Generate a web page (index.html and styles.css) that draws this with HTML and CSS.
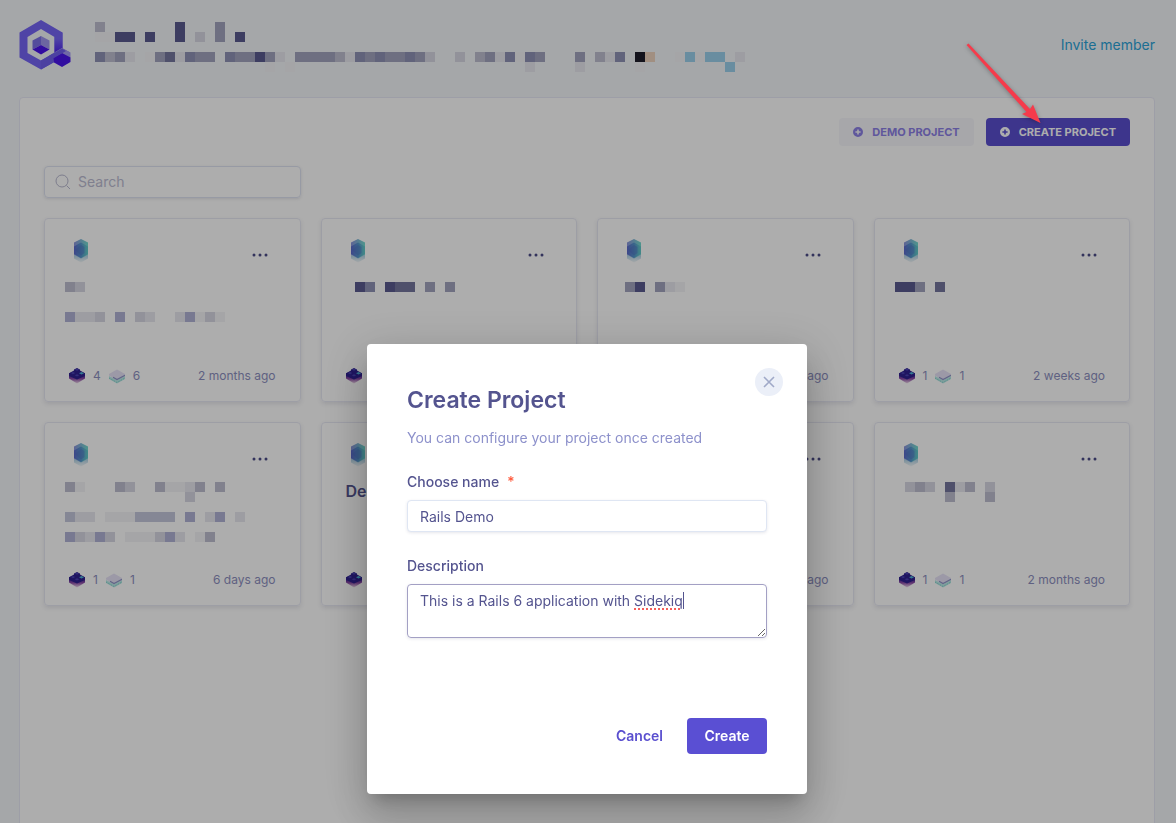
FILE: index.html
```html
<!DOCTYPE html>
<html lang="en">
<head>
<meta charset="utf-8">
<meta name="viewport" content="width=device-width, initial-scale=1">
<title>Create Project</title>
<link rel="stylesheet" href="styles.css">
</head>
<body>
<svg class="defs" width="0" height="0" aria-hidden="true">
  <defs>
    <linearGradient id="hexOuter" x1="0" y1="0" x2="1" y2="0"><stop offset="0" stop-color="#8b93dc"/><stop offset="1" stop-color="#72dccf"/></linearGradient>
    <linearGradient id="hexInner" x1="0" y1="0" x2="1" y2="0"><stop offset="0" stop-color="#5c68cc"/><stop offset="0.5" stop-color="#5596cc"/><stop offset="1" stop-color="#62ccc8"/></linearGradient>
    <linearGradient id="hexShade" x1="0" y1="0" x2="0" y2="1"><stop offset="0.6" stop-color="#b4d4e6"/><stop offset="1" stop-color="#f4f8fa"/></linearGradient>
    <linearGradient id="blockSide" x1="0" y1="0" x2="0" y2="1"><stop offset="0.3" stop-color="#3a1f94"/><stop offset="0.65" stop-color="#8b4aa6"/><stop offset="1" stop-color="#f0dcec"/></linearGradient>
    <linearGradient id="ring" x1="0" y1="0" x2="0" y2="1"><stop offset="0.3" stop-color="#7565f5"/><stop offset="1" stop-color="#4a1bec"/></linearGradient>
    <symbol id="hex" viewBox="0 0 24 24">
      <path fill="url(#hexShade)" d="M5 7h14v12.500l-7 4-7-4z"/>
      <path fill="url(#hexOuter)" d="M12 0l7 3.500v12L12 19.500l-7-4v-12z"/>
      <path fill="url(#hexInner)" d="M12 3.500l7 4V15l-7 4-7-4V7.500z"/>
      <path fill="#4f6fc4" opacity=".45" d="M12 6l3.500 2v6L12 16.500 6 11z"/>
    </symbol>
    <symbol id="blocks" viewBox="0 0 16 16">
      <path fill="url(#blockSide)" d="M0 5.500L8 2l8 3.500v5L8 15.500l-8-5z"/>
      <path fill="#2f2090" d="M8 0l3 1.500v1l5 2.700V8L8 11.500 0 8V5.200l5-2.700v-1z"/>
      <path fill="#4a42b4" d="M8 .5l2.200 1L8 2.700l-2.200-1.200zM4 4l2.200 1.100L4 6.200 1.800 5.100zM8 6.200l2.200 1.100L8 8.400 5.800 7.300z"/>
      <path fill="#4fb5d8" d="M12.500 4l2.500 1.200-2.500 1.300L10 5.200z"/>
    </symbol>
    <symbol id="layer" viewBox="0 0 16 16">
      <path fill="#a5e3df" opacity=".75" d="M0 8l8 4 8-4v3L8 15.500 0 11z"/>
      <path fill="#e6e2f6" d="M8 1.500l8 4.500v1.500L8 12 0 7.500V6z"/>
      <path fill="none" stroke="#8f94c8" stroke-width="1.200" d="M4 9.200l4 2.300 8-4.300"/>
      <path fill="none" stroke="#75cdc8" stroke-width="1" stroke-dasharray="1 1" d="M0 10l8 4.500 8-4.500"/>
    </symbol>
    <symbol id="dots" viewBox="0 0 16 4">
      <circle cx="2" cy="2" r="1.500"/><circle cx="8" cy="2" r="1.500"/><circle cx="14" cy="2" r="1.500"/>
    </symbol>
    <symbol id="plus" viewBox="0 0 10 10">
      <path fill-rule="evenodd" d="M5 0a5 5 0 100 10A5 5 0 005 0zM4.200 2.400h1.600v1.800h1.800v1.600H5.800v1.800H4.200V5.800H2.400V4.200h1.800z"/>
    </symbol>
  </defs>
</svg>

<div class="page">
  <header class="header">
    <svg class="logo" viewBox="0 0 52 50" role="img" aria-label="Logo">
      <path fill="#7565f5" fill-rule="evenodd" d="M22 0l21.500 12.500v25L22 49.500.5 37.500v-25zM22 9L8.500 17v16L22 40.500 35.500 33V17z"/>
      <path fill="url(#ring)" d="M35.500 17l8-4.500V29l-8 5z"/>
      <path fill="#7060ee" d="M22 49.500V40.500L43 28l8 4.500L30 45z"/>
      <path fill="#a79df5" d="M43 28l8.500 4.500v5L43 42.500 34.500 38v-5z"/>
      <path fill="#4a16ec" d="M34.500 37.500L43 33l8.500 4.500v4.500L43 47l-8-4.500z"/>
      <path fill="#7060ee" d="M30 36l13-7.500 4 2.500-12 7z"/>
      <path fill="#7c70e6" d="M22 16l-8.500 4.500v9L22 25z"/>
      <path fill="#a095ee" d="M22 16l8.500 4.500v9L22 25z"/>
      <path fill="#4a12ec" d="M22 25l8.500 4.500L22 34.500l-8.500-5z"/>
    </svg>
    <svg class="redacted redacted-head" viewBox="0 -2 650 50" aria-hidden="true">
      <path class="k1" d="M20 10h20v10H20zM50 10h10v10H50zM80 0h10v20H80zM140 10h10v10h-10zM160 30h10v10h-10z"/>
      <path class="k2" d="M70 30h10v10H70z"/>
      <path class="k3" d="M0 30h10v10H0zM90 30h10v10H90zM130 30h10v10h-10zM260 30h10v10h-10zM280 30h10v10h-10zM310 30h10v10h-10zM410 30h10v10h-10zM430 30h10v10h-10zM520 30h10v10h-10z"/>
      <path class="k4" d="M120 0h10v20h-10zM20 30h10v10H20zM60 30h10v10H60zM100 30h20v10h-20zM140 30h20v10h-20zM170 30h10v10h-10zM200 30h40v10h-40zM270 30h10v10h-10zM290 30h20v10h-20zM320 30h10v10h-10zM390 30h10v10h-10zM440 30h10v10h-10zM480 30h10v10h-10z"/>
      <path class="k5" d="M0 0h10v10H0zM10 30h10v10H10zM240 30h10v10h-10zM380 30h10v10h-10zM500 30h10v10h-10z"/>
      <path class="k6" d="M100 10h10v10h-10zM330 30h10v10h-10zM360 30h10v10h-10z"/>
      <path class="k7" d="M30 30h10v10H30zM80 30h10v10H80zM180 30h10v10h-10zM250 30h10v10h-10zM400 30h10v10h-10zM430 40h10v10h-10zM480 40h10v10h-10zM510 30h10v10h-10zM640 30h10v10h-10z"/>
      <path class="k8" d="M0 10h20v10H0zM50 30h10v10H50zM170 40h10v10h-10zM190 40h10v10h-10zM420 30h10v10h-10zM580 30h10v10h-10zM600 30h10v10h-10zM540 40h10v10h-10z"/>
      <path fill="#1e1d2a" d="M540 30h10v10h-10z"/>
      <path fill="#eed3be" d="M550 30h10v10h-10z"/>
      <path fill="#9bd0ec" d="M590 30h10v10h-10zM610 30h20v10h-20zM630 40h10v10h-10z"/>
    </svg>
    <a class="invite" href="#">Invite member</a>
  </header>

  <main class="panel">
    <div class="actions">
      <button class="btn btn-soft" type="button"><svg class="plus" aria-hidden="true"><use href="#plus"/></svg>DEMO PROJECT</button>
      <button class="btn btn-solid" type="button"><svg class="plus" aria-hidden="true"><use href="#plus"/></svg>CREATE PROJECT</button>
    </div>
    <div class="grid">
      <label class="search">
        <svg class="search-icon" viewBox="0 0 16 16" aria-hidden="true"><circle cx="7" cy="7" r="6"/><path d="M11.500 11.500L15 15"/></svg>
        <input type="search" placeholder="Search" aria-label="Search">
      </label>
    </div>
    <div class="grid">
      <article class="card">
        <div class="card-top"><svg class="hex" aria-hidden="true"><use href="#hex"/></svg><button class="more" type="button" aria-label="More"><svg class="dots"><use href="#dots"/></svg></button></div>
        <svg class="redacted" viewBox="0 0 200 60" aria-hidden="true">
          <path class="k5" d="M-4 4h10v10H-4z"/><path class="k6" d="M6 4h10v10H6z"/>
          <path class="b1" d="M-4 34h10v10H-4zM46 34h10v10H46zM116 34h10v10h-10z"/>
          <path class="k6" d="M26 34h10v10H26zM66 34h10v10H66zM136 34h10v10h-10z"/>
          <path class="k7" d="M6 34h20v10H6zM76 34h10v10H76zM106 34h10v10h-10z"/><path class="k8" d="M126 34h10v10h-10zM146 34h10v10h-10z"/>
        </svg>
        <div class="card-foot"><span class="stat"><svg class="mini"><use href="#blocks"/></svg>4</span><span class="stat"><svg class="mini"><use href="#layer"/></svg>6</span><time>2 months ago</time></div>
      </article>
      <article class="card">
        <div class="card-top"><svg class="hex" aria-hidden="true"><use href="#hex"/></svg><button class="more" type="button" aria-label="More"><svg class="dots"><use href="#dots"/></svg></button></div>
        <svg class="redacted" viewBox="0 0 200 60" aria-hidden="true">
          <path class="k1" d="M9 4h10v10H9zM39 4h10v10H39z"/><path class="k2" d="M49 4h20v10H49z"/><path class="k3" d="M19 4h10v10H19z"/><path class="k4" d="M79 4h10v10H79zM99 4h10v10H99z"/>
        </svg>
        <div class="card-foot"><span class="stat"><svg class="mini"><use href="#blocks"/></svg>1</span></div>
      </article>
      <article class="card">
        <div class="card-top"><svg class="hex" aria-hidden="true"><use href="#hex"/></svg><button class="more" type="button" aria-label="More"><svg class="dots"><use href="#dots"/></svg></button></div>
        <svg class="redacted" viewBox="0 0 200 60" aria-hidden="true">
          <path class="k1" d="M13 4h10v10H13z"/><path class="k4" d="M3 4h10v10H3zM33 4h10v10H33z"/><path class="k7" d="M43 4h10v10H43z"/><path class="k8" d="M53 4h10v10H53z"/>
        </svg>
        <div class="card-foot"><time>ago</time></div>
      </article>
      <article class="card">
        <div class="card-top"><svg class="hex" aria-hidden="true"><use href="#hex"/></svg><button class="more" type="button" aria-label="More"><svg class="dots"><use href="#dots"/></svg></button></div>
        <svg class="redacted" viewBox="0 0 200 60" aria-hidden="true">
          <path class="k1" d="M-4 4h20v10H-4z"/><path class="k4" d="M16 4h10v10H16z"/><path class="k2" d="M36 4h10v10H36z"/>
        </svg>
        <div class="card-foot"><span class="stat"><svg class="mini"><use href="#blocks"/></svg>1</span><span class="stat"><svg class="mini"><use href="#layer"/></svg>1</span><time>2 weeks ago</time></div>
      </article>
      <article class="card">
        <div class="card-top"><svg class="hex" aria-hidden="true"><use href="#hex"/></svg><button class="more" type="button" aria-label="More"><svg class="dots"><use href="#dots"/></svg></button></div>
        <svg class="redacted" viewBox="0 0 200 60" aria-hidden="true">
          <path class="k5" d="M-4 0h10v10H-4zM46 0h10v10H46zM86 0h10v10H86zM126 0h10v10h-10zM146 0h10v10h-10zM136 50h10v10h-10z"/>
          <path class="k6" d="M56 0h10v10H56zM116 10h10v10h-10zM6 50h10v10H6zM36 50h10v10H36zM86 50h10v10H86z"/>
          <path class="k7" d="M116 0h10v10h-10zM6 30h20v10H6zM136 30h10v10h-10zM166 30h10v10h-10zM16 50h10v10H16zM106 50h10v10h-10z"/>
          <path class="k8" d="M6 0h10v10H6zM96 0h20v10H96zM36 30h30v10H36zM56 50h30v10H56zM126 50h10v10h-10z"/>
          <path class="b2" d="M-4 30h10v10H-4zM66 30h40v10H66z"/>
          <path class="b1" d="M116 30h10v10h-10zM146 30h10v10h-10zM-4 50h10v10H-4zM26 50h10v10H26zM96 50h10v10H96z"/>
        </svg>
        <div class="card-foot"><span class="stat"><svg class="mini"><use href="#blocks"/></svg>1</span><span class="stat"><svg class="mini"><use href="#layer"/></svg>1</span><time>6 days ago</time></div>
      </article>
      <article class="card">
        <div class="card-top"><svg class="hex" aria-hidden="true"><use href="#hex"/></svg><button class="more" type="button" aria-label="More"><svg class="dots"><use href="#dots"/></svg></button></div>
        <h2 class="card-title">De</h2>
        <div class="card-foot"><span class="stat"><svg class="mini"><use href="#blocks"/></svg>1</span></div>
      </article>
      <article class="card">
        <div class="card-top"><svg class="hex" aria-hidden="true"><use href="#hex"/></svg><button class="more" type="button" aria-label="More"><svg class="dots"><use href="#dots"/></svg></button></div>
        <div class="card-foot"><time>ago</time></div>
      </article>
      <article class="card">
        <div class="card-top"><svg class="hex" aria-hidden="true"><use href="#hex"/></svg><button class="more" type="button" aria-label="More"><svg class="dots"><use href="#dots"/></svg></button></div>
        <svg class="redacted" viewBox="0 0 200 60" aria-hidden="true">
          <path class="k2" d="M46 0h10v10H46z"/><path class="k5" d="M16 0h10v10H16zM66 0h10v10H66zM46 10h10v10H46zM86 10h10v10H86z"/><path class="k6" d="M6 0h10v10H6zM26 0h10v10H26zM86 0h10v10H86z"/><path class="k7" d="M56 0h10v10H56z"/>
        </svg>
        <div class="card-foot"><span class="stat"><svg class="mini"><use href="#blocks"/></svg>1</span><span class="stat"><svg class="mini"><use href="#layer"/></svg>1</span><time>2 months ago</time></div>
      </article>
    </div>
  </main>
</div>

<div class="overlay">
  <form class="modal" role="dialog" aria-modal="true" aria-labelledby="modal-title">
    <button class="close" type="button" aria-label="Close"><svg viewBox="0 0 12 12"><path d="M1 1l10 10M11 1L1 11"/></svg></button>
    <h1 class="modal-title" id="modal-title">Create Project</h1>
    <p class="modal-sub">You can configure your project once created</p>
    <label class="label" for="name">Choose name<span class="required">*</span></label>
    <input class="field" id="name" type="text" value="Rails Demo">
    <label class="label" for="description">Description</label>
    <div class="area">
      <div class="area-marks" aria-hidden="true">This is a Rails 6 application with <span class="misspelt">Sidekiq</span></div>
      <textarea class="area-input" id="description" spellcheck="false">This is a Rails 6 application with Sidekiq</textarea>
    </div>
    <div class="modal-actions">
      <button class="link-btn" type="button">Cancel</button>
      <button class="primary-btn" type="submit">Create</button>
    </div>
  </form>
</div>

<svg class="arrow" viewBox="0 0 90 92" aria-hidden="true">
  <path d="M6.500 7L8.500 5.500 70 71l3-4.500L80.500 85 62 76l4.500-2z"/>
</svg>
</body>
</html>
```
FILE: styles.css
```css
* {
  box-sizing: border-box;
}

body {
  margin: 0;
  background: #f4f6fa;
  color: #54548f;
  font-family: Inter, "Liberation Sans", sans-serif;
  font-size: 14px;
  line-height: 20px;
}

button,
input,
textarea {
  font: inherit;
  color: inherit;
}

button {
  border: 0;
  padding: 0;
  background: none;
  cursor: pointer;
}

.defs {
  position: absolute;
}

.page {
  display: flex;
  flex-direction: column;
  height: 100vh;
  overflow: hidden;
  padding: 0 21px 0 19px;
}

.header {
  display: flex;
  align-items: center;
  gap: 24px;
  padding: 20px 0 27px;
}

.logo {
  flex: none;
  width: 52px;
  height: 50px;
}

.redacted {
  display: block;
  flex: none;
  width: 200px;
  height: 60px;
  margin-top: 7px;
  overflow: visible;
  shape-rendering: crispEdges;
}

.redacted-head {
  width: 650px;
  height: 50px;
  margin-top: 0;
}

.k1 { fill: #5a5a90; }
.k2 { fill: #75769e; }
.k3 { fill: #8f92b5; }
.k4 { fill: #a2a4be; }
.k5 { fill: #bfbfd0; }
.k6 { fill: #d7d7e3; }
.k7 { fill: #e7e7ef; }
.k8 { fill: #f4f4f6; }
.b1 { fill: #b2b3d6; }
.b2 { fill: #c5c7dc; }

.invite {
  margin-left: auto;
  color: #2ba3d8;
  text-decoration: none;
}

.panel {
  display: flex;
  flex: none;
  flex-direction: column;
  gap: 20px;
  min-height: 100vh;
  padding: 20px 24px;
  border: 1px solid #e8e9f6;
  border-radius: 4px;
  background: #fff;
}

.actions {
  display: flex;
  justify-content: flex-end;
  gap: 12px;
}

.btn {
  display: flex;
  align-items: center;
  gap: 9px;
  height: 28px;
  padding: 0 14px;
  border-radius: 4px;
  font-size: 11px;
  font-weight: 700;
}

.btn-soft {
  background: #f6f7fb;
  color: #8d80e6;
}

.btn-solid {
  background: #5a4fcf;
  color: #fff;
}

.plus {
  width: 10px;
  height: 10px;
  fill: currentColor;
}

.grid {
  display: grid;
  grid-template-columns: repeat(4, minmax(0, 1fr));
  gap: 20px;
}

.search {
  display: flex;
  align-items: center;
  gap: 7px;
  height: 32px;
  padding: 0 10px;
  border: 1px solid #dfe4f2;
  border-radius: 4px;
  box-shadow: 0 1px 3px rgba(60, 60, 100, 0.14);
}

.search-icon {
  flex: none;
  width: 16px;
  height: 16px;
  fill: none;
  stroke: #b9b9d0;
}

.search input {
  flex: 1;
  min-width: 0;
  padding: 0;
  border: 0;
  outline: 0;
  background: none;
}

.search input::placeholder {
  color: #bcbcd2;
  opacity: 1;
}

.card {
  display: flex;
  flex-direction: column;
  height: 184px;
  padding: 20px 24px 15px;
  border: 1px solid #e8e9f4;
  border-radius: 4px;
  box-shadow: 0 2px 4px rgba(60, 60, 100, 0.12);
}

.card-top {
  display: flex;
  align-items: flex-start;
  justify-content: space-between;
}

.hex {
  width: 24px;
  height: 24px;
}

.more {
  display: grid;
  place-items: center;
  width: 32px;
  height: 32px;
}

.dots {
  width: 16px;
  height: 4px;
  fill: #4c4c88;
}

.card-title {
  margin: 4px 0 0;
  font-size: 16px;
  font-weight: 600;
  line-height: 24px;
}

.card-foot {
  display: flex;
  align-items: center;
  gap: 8px;
  height: 20px;
  margin-top: auto;
  color: #8d8fc0;
  font-size: 12px;
}

.card-foot time {
  margin-left: auto;
}

.stat {
  display: flex;
  align-items: center;
  gap: 8px;
}

.mini {
  width: 16px;
  height: 16px;
}

.overlay {
  position: fixed;
  inset: 0;
  display: flex;
  align-items: flex-end;
  justify-content: center;
  padding: 0 21px 29px 19px;
  background: rgba(0, 0, 0, 0.32);
}

.modal {
  position: relative;
  display: flex;
  flex-direction: column;
  width: 100%;
  max-width: 440px;
  padding: 40px;
  border-radius: 4px;
  background: #fff;
  box-shadow: 0 11px 15px -7px rgba(0, 0, 0, 0.2), 0 24px 38px 3px rgba(0, 0, 0, 0.14), 0 9px 46px 8px rgba(0, 0, 0, 0.12);
}

.close {
  position: absolute;
  top: 24px;
  right: 24px;
  display: grid;
  place-items: center;
  width: 28px;
  height: 28px;
  border-radius: 50%;
  background: #ebeff8;
}

.close svg {
  width: 12px;
  height: 12px;
  stroke: #a0a9c8;
  stroke-width: 1.6;
}

.modal-title {
  margin: 0;
  font-size: 23px;
  font-weight: 600;
  line-height: 32px;
}

.modal-sub {
  margin: 12px 0 0;
  color: #8d91cb;
}

.label {
  margin: 24px 0 8px;
  font-weight: 500;
}

.required {
  margin-left: 8px;
  color: #ff5a3c;
}

.field {
  width: 100%;
  height: 32px;
  padding: 0 12px;
  border: 1px solid #dfe6f3;
  border-radius: 4px;
  outline: 0;
  box-shadow: 0 1px 3px rgba(60, 60, 100, 0.12);
}

.area {
  display: grid;
}

.area-marks,
.area-input {
  grid-area: 1 / 1;
  padding: 6px 12px;
  border: 1px solid transparent;
}

.area-marks {
  color: transparent;
}

.misspelt {
  border-right: 1px solid #54548f;
  text-decoration: underline dotted #f5605c 2px;
  text-underline-offset: 2px;
  text-decoration-skip-ink: none;
}

.area-input {
  display: block;
  width: 100%;
  height: 54px;
  margin: 0;
  border-color: #a3a0c4;
  border-radius: 4px;
  outline: 0;
  background: none;
  box-shadow: 0 1px 3px rgba(60, 60, 100, 0.12);
  resize: vertical;
}

.modal-actions {
  display: flex;
  justify-content: flex-end;
  gap: 24px;
  margin-top: 80px;
  font-weight: 600;
}

.link-btn {
  color: #5a4fcf;
}

.primary-btn {
  min-width: 80px;
  height: 36px;
  border-radius: 4px;
  background: #5a4fd3;
  color: #fff;
}

.arrow {
  position: absolute;
  top: 38px;
  right: 126px;
  width: 90px;
  height: 92px;
  fill: #f53b4b;
  filter: drop-shadow(0 1px 2px rgba(0, 0, 0, 0.3));
}
```
